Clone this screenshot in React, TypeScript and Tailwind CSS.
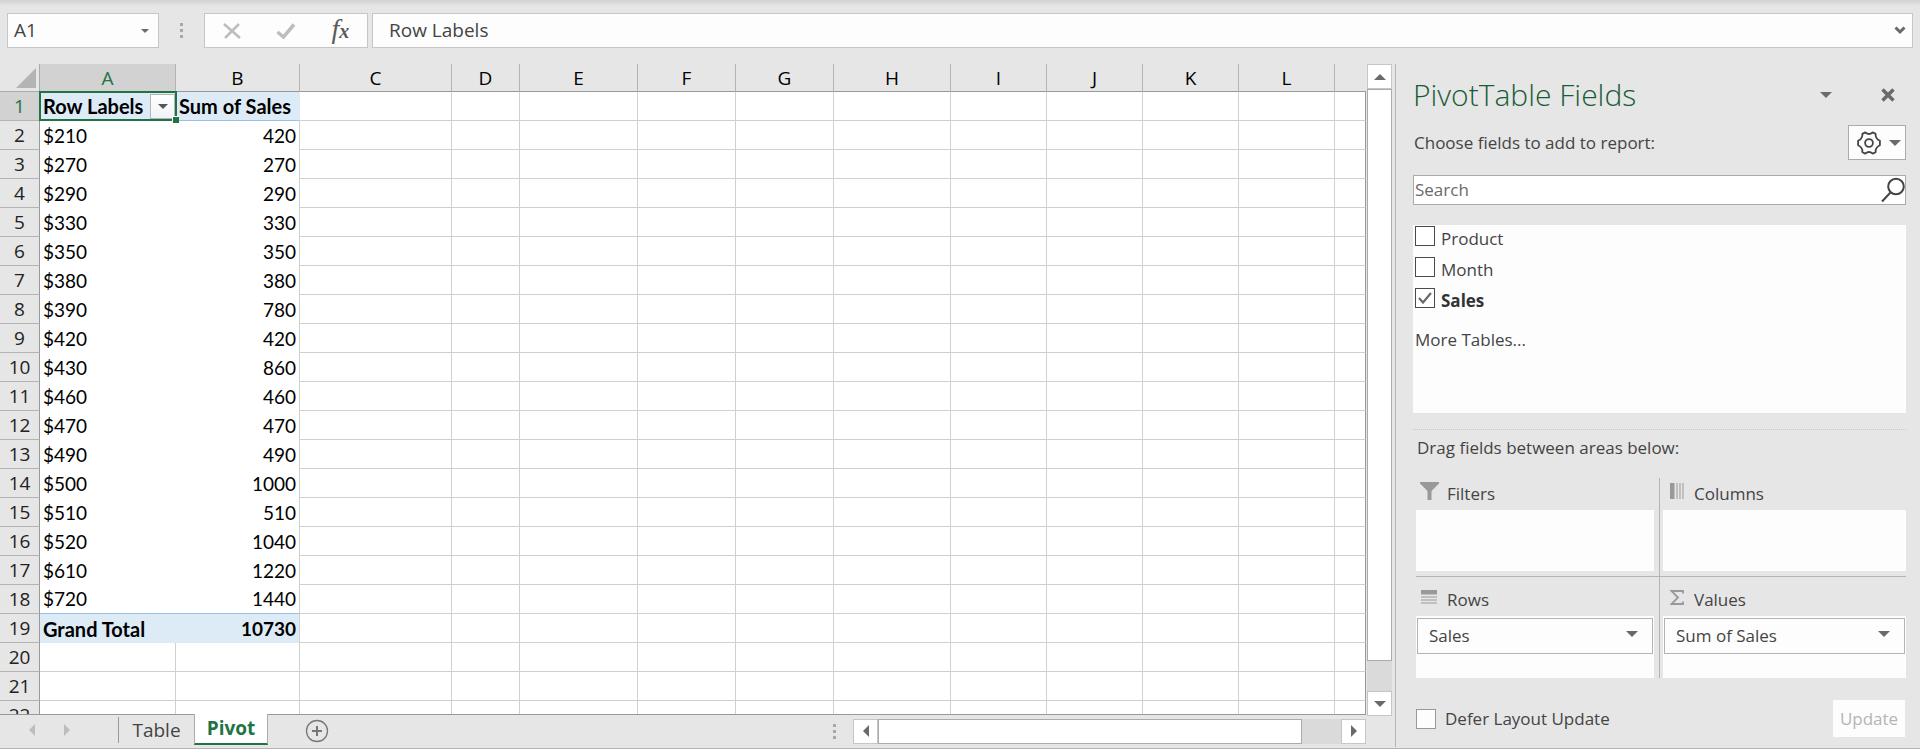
import React from "react";

const columns = ["A", "B", "C", "D", "E", "F", "G", "H", "I", "J", "K", "L", ""];
const colWidths = [136, 124, 152, 68, 118, 98, 98, 117, 96, 96, 96, 96];

const pivotRows = [
  ["Row Labels", "Sum of Sales"],
  ["$210", "420"],
  ["$270", "270"],
  ["$290", "290"],
  ["$330", "330"],
  ["$350", "350"],
  ["$380", "380"],
  ["$390", "780"],
  ["$420", "420"],
  ["$430", "860"],
  ["$460", "460"],
  ["$470", "470"],
  ["$490", "490"],
  ["$500", "1000"],
  ["$510", "510"],
  ["$520", "1040"],
  ["$610", "1220"],
  ["$720", "1440"],
  ["Grand Total", "10730"],
  ["", ""],
  ["", ""],
  ["", ""],
];

const Caret = ({ className = "" }: { className?: string }) => (
  <svg width="12" height="6" viewBox="0 0 12 6" className={className} fill="currentColor">
    <path d="M0 0h12L6 6z" />
  </svg>
);

const Dots = () => (
  <div className="flex flex-col gap-[3px]">
    <span className="size-[3px] bg-[#a8a8a8]" />
    <span className="size-[3px] bg-[#a8a8a8]" />
    <span className="size-[3px] bg-[#a8a8a8]" />
  </div>
);

const FormulaBar = () => (
  <div className="flex h-16 shrink-0 items-start bg-linear-to-b from-[#d2d2d2] to-[#e6e6e6] to-10% px-[7px] pt-[13px]">
    <div className="flex h-[35px] w-[152px] items-center border border-[#c6c6c6] bg-[#fdfdfd] pr-[9px]">
      <input
        aria-label="Name box"
        defaultValue="A1"
        className="w-full min-w-0 pl-[6px] text-[19px] text-[#444] outline-none"
      />
      <button aria-label="Show names">
        <Caret className="h-[4px] w-[8px] text-[#6a6a6a]" />
      </button>
    </div>
    <div className="flex h-[35px] w-[45px] items-center justify-center">
      <Dots />
    </div>
    <div className="flex h-[35px] w-[164px] items-center justify-around border border-[#c6c6c6] bg-[#fdfdfd]">
      <button aria-label="Cancel">
        <svg width="18" height="16" viewBox="0 0 18 16" fill="none" stroke="#bdbdbd" strokeWidth="2.5">
          <path d="M1 1l16 14M16 1L2 15" />
        </svg>
      </button>
      <button aria-label="Enter">
        <svg width="20" height="16" viewBox="0 0 20 16" fill="none" stroke="#bdbdbd" strokeWidth="3.5">
          <path d="M1.500 9l6 5L18 1.500" />
        </svg>
      </button>
      <button
        aria-label="Insert function"
        className="pb-[2px] font-['Liberation_Serif',serif] text-[28px] leading-7 text-[#5a5a5a] italic"
      >
        f<span className="text-xl font-bold">x</span>
      </button>
    </div>
    <div className="ml-1 flex h-[35px] flex-1 items-center border border-[#c6c6c6] bg-[#fdfdfd] pr-[6px]">
      <input
        aria-label="Formula"
        defaultValue="Row Labels"
        className="min-w-0 flex-1 pl-4 text-[19px] text-[#444] outline-none"
      />
      <button aria-label="Expand formula bar">
        <svg width="12" height="9" viewBox="0 0 12 9" fill="none" stroke="#6a6a6a" strokeWidth="3">
          <path d="M1.500 1.500L6 6l4.500-4.500" />
        </svg>
      </button>
    </div>
  </div>
);

const Sheet = () => (
  <div className="min-h-0 flex-1 overflow-hidden border-b border-[#999]">
    <table className="w-full table-fixed border-separate border-spacing-0">
      <colgroup>
        <col style={{ width: 40 }} />
        {colWidths.map((w, i) => (
          <col key={i} style={{ width: w }} />
        ))}
        <col />
      </colgroup>
      <thead>
        <tr className="h-7 text-[19px] leading-[25px] text-black">
          <th className="border-r border-b border-[#ababab] p-0 pr-[3px] pb-[3px] align-bottom">
            <svg width="20" height="20" viewBox="0 0 20 20" className="ml-auto block" fill="#b4b4b4">
              <path d="M20 0v20H0z" />
            </svg>
          </th>
          {columns.map((c, i) => (
            <th
              key={i}
              className={`border-b border-b-[#999] p-0 pt-[2px] font-normal ${
                i === 0 ? "bg-[#d2d2d2] text-[#217346]" : ""
              } ${i < 12 ? "border-r border-r-[#b4b4b4]" : ""}`}
            >
              {c}
            </th>
          ))}
        </tr>
      </thead>
      <tbody>
        {pivotRows.map(([label, value], r) => {
          const strong = r === 0 || r === 18;
          const inPivot = r < 19;
          const fill = strong ? "bg-[#ddebf7] font-bold" : "bg-white";
          return (
            <tr key={r} className="h-[29px] font-[Lato,sans-serif] text-[19px] leading-7 text-black">
              <th
                className={`border-r border-b border-r-[#999] border-b-[#b4b4b4] p-0 font-['Open_Sans',sans-serif] font-normal ${
                  r === 0 ? "bg-[#d2d2d2] text-[#217346]" : "text-[#222]"
                }`}
              >
                {r + 1}
              </th>
              <td
                className={`relative p-0 pl-[3px] whitespace-nowrap ${fill} ${strong ? "text-[20px]" : ""} ${
                  inPivot ? "" : "border-r border-b border-[#d0d0d0]"
                } ${r === 0 || r === 17 ? "border-b border-[#9bc2e6]" : ""}`}
              >
                {label}
                {r === 0 && (
                  <>
                    <button
                      aria-label="Filter row labels"
                      className="absolute top-[2px] right-px flex h-[25px] w-[25px] items-center justify-center border border-[#b4b4b4] bg-linear-to-b from-white to-[#f0f3f8]"
                    >
                      <Caret className="h-[5px] w-[10px] text-[#555]" />
                    </button>
                    <span className="pointer-events-none absolute -inset-px z-10 border-2 border-[#217346]" />
                    <span className="absolute -right-[3px] -bottom-[3px] z-20 size-[7px] border-t border-l border-white bg-[#217346]" />
                  </>
                )}
              </td>
              <td
                className={`border-r p-0 whitespace-nowrap ${fill} ${
                  r === 0
                    ? "border-r-[#ddebf7] pl-[3px] text-left text-[20px]"
                    : "border-r-[#d0d0d0] pr-[3px] text-right"
                } ${!inPivot ? "border-b border-b-[#d0d0d0]" : ""} ${
                  r === 0 || r === 17 ? "border-b border-b-[#9bc2e6]" : ""
                }`}
              >
                {value}
              </td>
              {columns.slice(2).map((_, i) => (
                <td
                  key={i}
                  className={`border-r border-b border-b-[#d0d0d0] bg-white p-0 ${
                    i === 10 ? "border-r-[#999]" : "border-r-[#d0d0d0]"
                  }`}
                />
              ))}
            </tr>
          );
        })}
      </tbody>
    </table>
  </div>
);

const SheetTabs = () => (
  <div className="flex h-[33px] shrink-0 text-[19px]">
    <div className="flex h-[30px] w-[119px] items-center gap-[29px] pl-[29px] text-[#bdbdbd]">
      <button aria-label="Previous sheet">
        <svg width="6" height="12" viewBox="0 0 6 12" fill="currentColor">
          <path d="M6 0v12L0 6z" />
        </svg>
      </button>
      <button aria-label="Next sheet">
        <svg width="6" height="12" viewBox="0 0 6 12" fill="currentColor">
          <path d="M0 0v12l6-6z" />
        </svg>
      </button>
      <span className="ml-auto h-[26px] w-px bg-[#999]" />
    </div>
    <button className="h-[30px] w-[75px] text-center leading-[28px] text-[#444]">Table</button>
    <button className="-mt-px h-[31px] w-[74px] border-x border-b-2 border-x-[#ababab] border-b-[#217346] bg-white leading-[29px] font-bold text-[#217346]">
      Pivot
    </button>
    <button aria-label="New sheet" className="ml-[37px] h-8">
      <svg width="24" height="24" viewBox="0 0 24 24" fill="none" stroke="#777">
        <circle cx="12" cy="12" r="10.500" strokeWidth="1.300" />
        <path d="M12 7v10M7 12h10" strokeWidth="2" />
      </svg>
    </button>
    <div className="ml-auto flex h-8 items-center gap-[17px]">
      <Dots />
      <div className="flex h-[25px] w-[513px] bg-[#dadada]">
        <button
          aria-label="Scroll left"
          className="flex w-[25px] items-center justify-center border border-[#c6c6c6] bg-white text-[#6a6a6a]"
        >
          <svg width="6" height="12" viewBox="0 0 6 12" fill="currentColor">
            <path d="M6 0v12L0 6z" />
          </svg>
        </button>
        <div className="w-[424px] border border-[#ababab] bg-white" />
        <button
          aria-label="Scroll right"
          className="ml-auto flex w-[25px] items-center justify-center border border-[#c6c6c6] bg-white text-[#6a6a6a]"
        >
          <svg width="6" height="12" viewBox="0 0 6 12" fill="currentColor">
            <path d="M0 0v12l6-6z" />
          </svg>
        </button>
      </div>
    </div>
  </div>
);

const VerticalScroll = () => (
  <div className="mr-[3px] mb-8 ml-px flex w-[25px] shrink-0 flex-col bg-[#dadada] text-[#6a6a6a]">
    <button
      aria-label="Scroll up"
      className="flex h-[25px] items-center justify-center border border-[#c6c6c6] bg-white"
    >
      <Caret className="rotate-180" />
    </button>
    <div className="mb-[30px] flex-1 border border-[#ababab] bg-white" />
    <button
      aria-label="Scroll down"
      className="flex h-[25px] items-center justify-center border border-[#c6c6c6] bg-white"
    >
      <Caret />
    </button>
  </div>
);

const FieldCheck = ({ name, checked = false }: { name: string; checked?: boolean }) => (
  <label className="flex h-[31px] items-start gap-[6px]">
    <span className="relative mt-px size-5">
      <input
        type="checkbox"
        defaultChecked={checked}
        className="peer block size-5 appearance-none border border-[#4a4a4a] bg-white"
      />
      <svg
        width="14"
        height="12"
        viewBox="0 0 14 12"
        fill="none"
        stroke="#6a6a6a"
        strokeWidth="2.200"
        className="pointer-events-none absolute top-1 left-[3px] hidden peer-checked:block"
      >
        <path d="M1 6l4 4.500L13 1" />
      </svg>
    </span>
    <span className={`pt-[2px] leading-6 ${checked ? "font-bold text-[#333]" : ""}`}>{name}</span>
  </label>
);

const AreaTitle = ({ icon, title }: { icon: React.ReactNode; title: string }) => (
  <h3 className="flex h-8 items-center pl-1">
    <span className="flex w-[27px] pb-[6px] text-[#999]">{icon}</span>
    {title}
  </h3>
);

const AreaItem = ({ name }: { name: string }) => (
  <button className="flex h-9 w-full items-center justify-between border border-[#b4b4b4] bg-[#fdfdfd] pr-[14px] pl-[11px]">
    {name}
    <Caret className="mb-1 text-[#6a6a6a]" />
  </button>
);

const FieldsPane = () => (
  <aside className="mb-px flex w-[525px] shrink-0 flex-col border-l border-[#b4b4b4] pr-[14px] pl-[17px] text-[17px] text-[#444]">
    <div className="flex h-[61px] items-center">
      <h2 className="text-[30px] font-light text-[#185c37]">PivotTable Fields</h2>
      <button aria-label="Pane options" className="mr-[49px] ml-auto text-[#6a6a6a]">
        <Caret />
      </button>
      <button aria-label="Close" className="mr-[11px] text-[#6a6a6a]">
        <svg width="14" height="14" viewBox="0 0 14 14" fill="none" stroke="currentColor" strokeWidth="3.500">
          <path d="M1.500 1.500l11 11M12.500 1.500l-11 11" />
        </svg>
      </button>
    </div>

    <div className="flex h-[35px] items-center justify-between pl-px">
      <p>Choose fields to add to report:</p>
      <button
        aria-label="Tools"
        className="flex h-[35px] w-[58px] items-center justify-center gap-2 border border-[#ababab] bg-[#fdfdfd] pl-[3px]"
      >
        <svg width="24" height="24" viewBox="0 0 24 24" fill="none" stroke="#444" strokeWidth="1.800" strokeLinejoin="round">
          <path d="M8.300 1.300Q12 4.600 15.700 1.300L18.600 2.900Q18.200 7.600 22.900 9.800V14.200Q18.200 16.400 18.600 21.100L15.700 22.700Q12 19.400 8.300 22.700L5.400 21.100Q5.800 16.400 1.100 14.200V9.800Q5.800 7.600 5.400 2.900z" />
          <circle cx="12" cy="12" r="3.900" />
        </svg>
        <Caret className="text-[#6a6a6a]" />
      </button>
    </div>

    <div className="mt-[15px] flex h-[30px] items-center border border-[#ababab] bg-white">
      <input
        type="search"
        aria-label="Search fields"
        placeholder="Search"
        className="min-w-0 flex-1 pl-px outline-none placeholder:text-[#6a6a6a]"
      />
      <svg width="24" height="26" viewBox="0 0 24 26" fill="none" stroke="#444" strokeWidth="2">
        <circle cx="15" cy="9.500" r="7.800" />
        <path d="M9.500 15.500L1 24.500" />
      </svg>
    </div>

    <div className="mt-5 h-[188px] bg-[#fdfdfd] pl-[2px]">
      <FieldCheck name="Product" />
      <FieldCheck name="Month" />
      <FieldCheck name="Sales" checked />
      <a href="#" className="mt-2 block leading-7">
        More Tables...
      </a>
    </div>

    <div className="mt-4 border-t border-dotted border-[#c6c6c6]" />
    <p className="mt-1 pl-1 leading-7">Drag fields between areas below:</p>

    <div className="mt-4 ml-[3px] grid grid-cols-[244px_1fr]">
      <section className="border-r border-b border-[#b4b4b4] pr-[5px] pb-[5px]">
        <AreaTitle
          title="Filters"
          icon={
            <svg width="19" height="18" viewBox="0 0 19 18" fill="currentColor">
              <path d="M0 0h19v1.500L11.500 9v9h-4V9L0 1.500z" />
            </svg>
          }
        />
        <div className="h-[61px] bg-[#fdfdfd]" />
      </section>
      <section className="border-b border-[#b4b4b4] pb-[5px] pl-[3px]">
        <AreaTitle
          title="Columns"
          icon={
            <svg width="14" height="16" viewBox="0 0 14 16" fill="currentColor" className="ml-[3px]">
              <path d="M0 0h4.500v16H0zM6.500 0h1v16h-1zM9.500 0h1v16h-1zM12.500 0h1v16h-1z" />
            </svg>
          }
        />
        <div className="h-[61px] bg-[#fdfdfd]" />
      </section>
      <section className="border-r border-[#b4b4b4] pt-[7px] pr-[5px]">
        <AreaTitle
          title="Rows"
          icon={
            <svg width="16" height="14" viewBox="0 0 16 14" fill="currentColor" className="ml-px">
              <path d="M0 0h16v4.500H0zM0 6.500h16v1H0zM0 9.500h16v1H0zM0 12.500h16v1H0z" />
            </svg>
          }
        />
        <div className="h-[62px] bg-[#fdfdfd] px-px pt-[2px]">
          <AreaItem name="Sales" />
        </div>
      </section>
      <section className="pt-[7px] pl-[3px]">
        <AreaTitle
          title="Values"
          icon={
            <svg width="14" height="15" viewBox="0 0 14 15" fill="none" stroke="currentColor" strokeWidth="1.800" className="ml-[3px]">
              <path d="M13 3.500V1H1.500L8 7.500L1.500 14H13v-2.500" />
            </svg>
          }
        />
        <div className="h-[62px] bg-[#fdfdfd] px-px pt-[2px]">
          <AreaItem name="Sum of Sales" />
        </div>
      </section>
    </div>

    <div className="mt-[22px] flex items-center justify-between pr-px pl-[3px]">
      <label className="flex items-center gap-[9px]">
        <input type="checkbox" className="size-5 appearance-none border border-[#999] bg-[#fdfdfd]" />
        Defer Layout Update
      </label>
      <button disabled className="h-[37px] w-[72px] bg-[#fdfdfd] text-[#b4b4b4]">
        Update
      </button>
    </div>
  </aside>
);

const App = () => {
  return (
    <div className="flex h-screen flex-col overflow-hidden border-b border-[#b4b4b4] bg-[#e6e6e6] font-['Open_Sans',sans-serif]">
      <FormulaBar />
      <main className="flex min-h-0 flex-1">
        <div className="flex min-w-0 flex-1 flex-col">
          <Sheet />
          <SheetTabs />
        </div>
        <VerticalScroll />
        <FieldsPane />
      </main>
    </div>
  );
};

export default App;
